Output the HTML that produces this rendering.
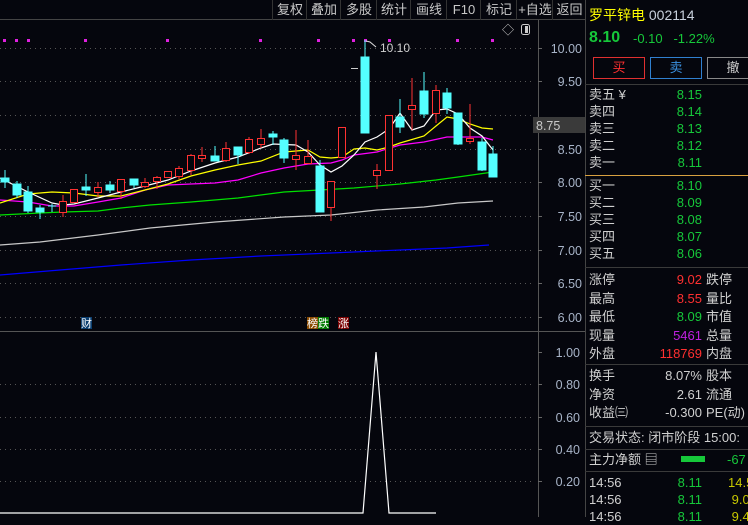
<!DOCTYPE html>
<html><head><meta charset="utf-8"><style>
body{margin:0;width:748px;height:517px;background:#05060d;overflow:hidden;font-family:"Liberation Sans","Noto Sans CJK SC",sans-serif;position:relative}
.a{position:absolute;white-space:nowrap}
.tb{position:absolute;top:0;height:20px;font-size:13px;color:#c8c8c8;line-height:20px;text-align:center;border-left:1px solid #333}
.r{position:absolute;left:589px;font-size:13px;color:#d0d0d0;line-height:17px;white-space:nowrap}
.g{color:#16c83a}.rd{color:#ff3030}
.v{position:absolute;text-align:right;font-size:13px;line-height:17px;white-space:nowrap}
.hl{position:absolute;left:585px;width:163px;height:1px;background:#3a3a3a}
</style></head><body>
<svg class="a" style="left:0;top:0" width="585" height="517">
<g stroke="#555" stroke-dasharray="1,4" stroke-width="1">
<line x1="0" x2="535" y1="48.5" y2="48.5"/><line x1="0" x2="535" y1="81.5" y2="81.5"/><line x1="0" x2="535" y1="115.5" y2="115.5"/><line x1="0" x2="535" y1="149.5" y2="149.5"/><line x1="0" x2="535" y1="182.5" y2="182.5"/><line x1="0" x2="535" y1="216.5" y2="216.5"/><line x1="0" x2="535" y1="250.5" y2="250.5"/><line x1="0" x2="535" y1="283.5" y2="283.5"/><line x1="0" x2="535" y1="317.5" y2="317.5"/>
<line x1="0" x2="532" y1="384.5" y2="384.5"/><line x1="0" x2="532" y1="417.5" y2="417.5"/><line x1="0" x2="532" y1="449.5" y2="449.5"/><line x1="0" x2="532" y1="481.5" y2="481.5"/>
</g>
<line x1="0" x2="585" y1="19.5" y2="19.5" stroke="#444"/>
<line x1="0" x2="585" y1="331.5" y2="331.5" stroke="#555"/>
<line x1="538.5" x2="538.5" y1="20" y2="517" stroke="#555"/>
<g stroke="#666"><line x1="538" x2="542" y1="48.5" y2="48.5"/><line x1="538" x2="542" y1="81.5" y2="81.5"/><line x1="538" x2="542" y1="149.5" y2="149.5"/><line x1="538" x2="542" y1="182.5" y2="182.5"/><line x1="538" x2="542" y1="216.5" y2="216.5"/><line x1="538" x2="542" y1="250.5" y2="250.5"/><line x1="538" x2="542" y1="283.5" y2="283.5"/><line x1="538" x2="542" y1="317.5" y2="317.5"/>
<line x1="538" x2="542" y1="352.5" y2="352.5"/><line x1="538" x2="542" y1="384.5" y2="384.5"/><line x1="538" x2="542" y1="417.5" y2="417.5"/><line x1="538" x2="542" y1="449.5" y2="449.5"/><line x1="538" x2="542" y1="481.5" y2="481.5"/></g>
<g fill="#e020e0"><rect x="3" y="39" width="3" height="3"/><rect x="15" y="39" width="3" height="3"/><rect x="27" y="39" width="3" height="3"/><rect x="84" y="39" width="3" height="3"/><rect x="166" y="39" width="3" height="3"/><rect x="259" y="39" width="3" height="3"/><rect x="317" y="39" width="3" height="3"/><rect x="352" y="39" width="3" height="3"/><rect x="364" y="39" width="3" height="3"/><rect x="388" y="39" width="3" height="3"/><rect x="456" y="39" width="3" height="3"/><rect x="491" y="39" width="3" height="3"/></g>
<g fill="none" stroke-width="1.2">
<polyline stroke="#0000ff" points="0,275 60,270 121,265 191,260 261,256 331,253 400,250 447,248 489,245"/>
<polyline stroke="#c8c8c8" points="0,245 40,242 98,235 150,228 215,222 284,217 331,215 377,210 424,207 458,203 493,201"/>
<polyline stroke="#00e000" points="0,215 40,213 63,212 98,211 121,208 150,205 191,202 238,198 284,192 320,190 354,188 400,184 436,180 458,177 493,172"/>
<polyline stroke="#ff00ff" points="0,200 28,202 52,206 74,206 98,202 121,198 145,190 168,185 191,184 215,183 238,180 261,173 284,168 308,164 331,163 342,160 354,155 377,152 400,145 424,142 447,137 470,137 482,137 493,140"/>
<polyline stroke="#ffff00" points="0,203 28,194 52,192 74,193 98,196 121,196 145,190 168,184 191,176 215,170 238,165 261,161 284,152 308,150 320,157 331,158 342,157 354,149 365,148 377,150 389,147 400,143 424,136 436,126 447,117 458,119 470,124 482,128 493,129"/>
<polyline stroke="#ffffff" points="0,178 28,192 52,203 63,205 74,204 98,198 121,192 145,186 168,180 191,171 215,163 238,157 261,148 273,144 296,145 308,152 320,165 331,172 342,166 354,155 365,142 377,137 389,129 400,113 412,130 424,126 436,110 447,109 458,114 470,128 482,136 493,150"/>
</g>
<g stroke="#54ffff" fill="#54ffff">
<line x1="5" x2="5" y1="170" y2="188"/><rect x="1" y="178" width="8" height="4"/>
<line x1="17" x2="17" y1="181" y2="198"/><rect x="13" y="184" width="8" height="11"/>
<line x1="28" x2="28" y1="186" y2="213"/><rect x="24" y="192" width="8" height="19"/>
<line x1="40" x2="40" y1="205" y2="219"/><rect x="36" y="208" width="8" height="4"/>
<line x1="52" x2="52" y1="204" y2="212"/><line x1="48" x2="56" y1="206" y2="206"/>
<line x1="86" x2="86" y1="174" y2="196"/><rect x="82" y="187" width="8" height="3"/>
<line x1="110" x2="110" y1="181" y2="193"/><rect x="106" y="185" width="8" height="5"/>
<line x1="134" x2="134" y1="179" y2="188"/><rect x="130" y="179" width="8" height="6"/>
<line x1="215" x2="215" y1="146" y2="161"/><rect x="211" y="156" width="8" height="5"/>
<line x1="238" x2="238" y1="147" y2="164"/><rect x="234" y="147" width="8" height="8"/>
<line x1="273" x2="273" y1="131" y2="145"/><rect x="269" y="134" width="8" height="3"/>
<line x1="284" x2="284" y1="138" y2="163"/><rect x="280" y="140" width="8" height="18"/>
<line x1="320" x2="320" y1="160" y2="212"/><rect x="316" y="166" width="8" height="46"/>
<line x1="365" x2="365" y1="40" y2="133"/><rect x="361" y="57" width="8" height="76"/>
<line x1="400" x2="400" y1="99" y2="133"/><rect x="396" y="117" width="8" height="10"/>
<line x1="424" x2="424" y1="72" y2="118"/><rect x="420" y="91" width="8" height="23"/>
<line x1="447" x2="447" y1="88" y2="114"/><rect x="443" y="93" width="8" height="15"/>
<line x1="458" x2="458" y1="113" y2="145"/><rect x="454" y="113" width="8" height="31"/>
<line x1="482" x2="482" y1="138" y2="171"/><rect x="478" y="142" width="8" height="28"/>
<line x1="493" x2="493" y1="146" y2="177"/><rect x="489" y="154" width="8" height="23"/>
</g>
<g stroke="#ff3232" fill="#05060d">
<line x1="63" x2="63" y1="195" y2="217"/><rect x="59.5" y="201.5" width="7" height="11"/>
<line x1="74" x2="74" y1="189" y2="202"/><rect x="70.5" y="189.5" width="7" height="13"/>
<line x1="98" x2="98" y1="182" y2="197"/><rect x="94.5" y="187.5" width="7" height="5"/>
<line x1="121" x2="121" y1="179" y2="199"/><rect x="117.5" y="179.5" width="7" height="12"/>
<line x1="145" x2="145" y1="178" y2="188"/><rect x="141.5" y="182.5" width="7" height="4"/>
<line x1="157" x2="157" y1="176" y2="189"/><rect x="153.5" y="177.5" width="7" height="4"/>
<line x1="168" x2="168" y1="171" y2="177"/><rect x="164.5" y="171.5" width="7" height="6"/>
<line x1="179" x2="179" y1="166" y2="179"/><rect x="175.5" y="168.5" width="7" height="8"/>
<line x1="191" x2="191" y1="154" y2="175"/><rect x="187.5" y="155.5" width="7" height="15"/>
<line x1="202" x2="202" y1="147" y2="162"/><rect x="198.5" y="155.5" width="7" height="3"/>
<line x1="226" x2="226" y1="142" y2="162"/><rect x="222.5" y="148.5" width="7" height="12"/>
<line x1="249" x2="249" y1="137" y2="154"/><rect x="245.5" y="139.5" width="7" height="13"/>
<line x1="261" x2="261" y1="129" y2="148"/><rect x="257.5" y="138.5" width="7" height="6"/>
<line x1="296" x2="296" y1="130" y2="170"/><rect x="292.5" y="155.5" width="7" height="4"/>
<line x1="308" x2="308" y1="140" y2="164"/><rect x="304.5" y="156.5" width="7" height="7"/>
<line x1="331" x2="331" y1="181" y2="221"/><rect x="327.5" y="181.5" width="7" height="26"/>
<line x1="342" x2="342" y1="127" y2="157"/><rect x="338.5" y="127.5" width="7" height="30"/>
<line x1="377" x2="377" y1="164" y2="189"/><rect x="373.5" y="170.5" width="7" height="5"/>
<line x1="389" x2="389" y1="115" y2="170"/><rect x="385.5" y="115.5" width="7" height="55"/>
<line x1="412" x2="412" y1="78" y2="130"/><rect x="408.5" y="105.5" width="7" height="4"/>
<line x1="436" x2="436" y1="85" y2="123"/><rect x="432.5" y="90.5" width="7" height="23"/>
<line x1="470" x2="470" y1="104" y2="144"/><rect x="466.5" y="138.5" width="7" height="3"/>
</g>
<line x1="351" x2="358" y1="68.5" y2="68.5" stroke="#ccc"/>
<polyline points="366,41 370,42 376,47" fill="none" stroke="#ddd"/>
<text x="380" y="52" fill="#d0d0d0" font-size="12" font-family="Liberation Sans">10.10</text>
<text x="502" y="34" fill="#ccc" font-size="12">◇</text>
<rect x="521.5" y="24.5" width="8" height="10" rx="2" fill="none" stroke="#ccc"/><rect x="525" y="26" width="3" height="7" fill="#ccc"/>
<polyline fill="none" stroke="#fff" stroke-width="1.2" points="0,513 363,513 376,352 389,513 436,513"/>
<g fill="#a8b4c8" font-size="12.5" text-anchor="end" font-family="Liberation Sans">
<text x="582" y="53">10.00</text><text x="582" y="86">9.50</text><text x="582" y="154">8.50</text><text x="582" y="187">8.00</text><text x="582" y="221">7.50</text><text x="582" y="255">7.00</text><text x="582" y="288">6.50</text><text x="582" y="322">6.00</text>
<text x="580" y="357">1.00</text><text x="580" y="389">0.80</text><text x="580" y="422">0.60</text><text x="580" y="454">0.40</text><text x="580" y="486">0.20</text>
</g>
<rect x="533" y="117" width="52" height="16" fill="#3a3a3a"/>
<text x="536" y="130" fill="#c8c8c8" font-size="12.5" font-family="Liberation Sans">8.75</text>
<rect x="81" y="317" width="11" height="12" fill="#0a3d6e"/><text x="81" y="327" fill="#fff" font-size="11">财</text>
<rect x="307" y="317" width="11" height="12" fill="#8a4a00"/><text x="307" y="327" fill="#fff" font-size="11">榜</text>
<rect x="318" y="317" width="11" height="12" fill="#007a00"/><text x="318" y="327" fill="#fff" font-size="11">跌</text>
<rect x="338" y="317" width="11" height="12" fill="#7a0000"/><text x="338" y="327" fill="#fff" font-size="11">涨</text>
</svg>
<div class="tb" style="left:272px;width:34px">复权</div><div class="tb" style="left:306px;width:34px">叠加</div><div class="tb" style="left:340px;width:36px">多股</div><div class="tb" style="left:376px;width:34px">统计</div><div class="tb" style="left:410px;width:36px">画线</div><div class="tb" style="left:446px;width:34px">F10</div><div class="tb" style="left:480px;width:36px">标记</div><div class="tb" style="left:516px;width:36px">+自选</div><div class="tb" style="left:552px;width:33px">返回</div>
<div class="a" style="left:585px;top:0;width:1px;height:517px;background:#444"></div>
<div class="a" style="left:589px;top:5px;font-size:14px;color:#ffff00">罗平锌电 <span style="color:#c8d0dc">002114</span></div>
<div class="a" style="left:589px;top:29px;font-size:16px;font-weight:bold;color:#16c83a">8.10</div>
<div class="a" style="left:633px;top:31px;font-size:13px;color:#16c83a">-0.10&nbsp;&nbsp;&nbsp;-1.22%</div>
<div class="a" style="left:593px;top:57px;width:50px;height:20px;border:1px solid #e03030;color:#ff3030;text-align:center;line-height:20px;font-size:13px">买</div>
<div class="a" style="left:650px;top:57px;width:50px;height:20px;border:1px solid #3080d0;color:#3a90e0;text-align:center;line-height:20px;font-size:13px">卖</div>
<div class="a" style="left:707px;top:57px;width:50px;height:20px;border:1px solid #888;color:#ccc;text-align:center;line-height:20px;font-size:13px">撤</div>
<div class="hl" style="top:84px"></div>
<div class="r" style="top:86px">卖五 ¥<br>卖四<br>卖三<br>卖二<br>卖一</div>
<div class="v g" style="left:640px;width:62px;top:86px">8.15<br>8.14<br>8.13<br>8.12<br>8.11</div>
<div class="a" style="left:585px;top:175px;width:163px;height:1px;background:#d8a040"></div>
<div class="r" style="top:177px">买一<br>买二<br>买三<br>买四<br>买五</div>
<div class="v g" style="left:640px;width:62px;top:177px">8.10<br>8.09<br>8.08<br>8.07<br>8.06</div>
<div class="hl" style="top:267px"></div>
<div class="r" style="top:271px;line-height:18.6px">涨停<br>最高<br>最低<br>现量<br>外盘</div>
<div class="v" style="left:620px;width:82px;top:271px;line-height:18.6px"><span class="rd">9.02</span><br><span class="rd">8.55</span><br><span class="g">8.09</span><br><span style="color:#c020e0">5461</span><br><span class="rd">118769</span></div>
<div class="r" style="left:706px;top:271px;line-height:18.6px">跌停<br>量比<br>市值<br>总量<br>内盘</div>
<div class="hl" style="top:364px"></div>
<div class="r" style="top:367px;line-height:18.6px">换手<br>净资<br>收益㈢</div>
<div class="v" style="left:620px;width:82px;top:367px;line-height:18.6px;color:#d0d0d0">8.07%<br>2.61<br>-0.300</div>
<div class="r" style="left:706px;top:367px;line-height:18.6px">股本<br>流通<br>PE(动)</div>
<div class="hl" style="top:426px"></div>
<div class="r" style="top:429px">交易状态: 闭市阶段 15:00:</div>
<div class="hl" style="top:449px"></div>
<div class="r" style="top:451px">主力净额 ▤</div>
<div class="a" style="left:681px;top:456px;width:24px;height:6px;background:#16c83a"></div>
<div class="a g" style="left:727px;top:451px;font-size:13px;line-height:17px">-67</div>
<div class="hl" style="top:471px"></div>
<div class="r" style="top:474px">14:56<br>14:56<br>14:56</div>
<div class="v g" style="left:640px;width:62px;top:474px">8.11<br>8.11<br>8.11</div>
<div class="a" style="left:728px;top:474px;font-size:13px;line-height:17px;color:#c8c800">14.5<br>&nbsp;9.0<br>&nbsp;9.4</div>
</body></html>
